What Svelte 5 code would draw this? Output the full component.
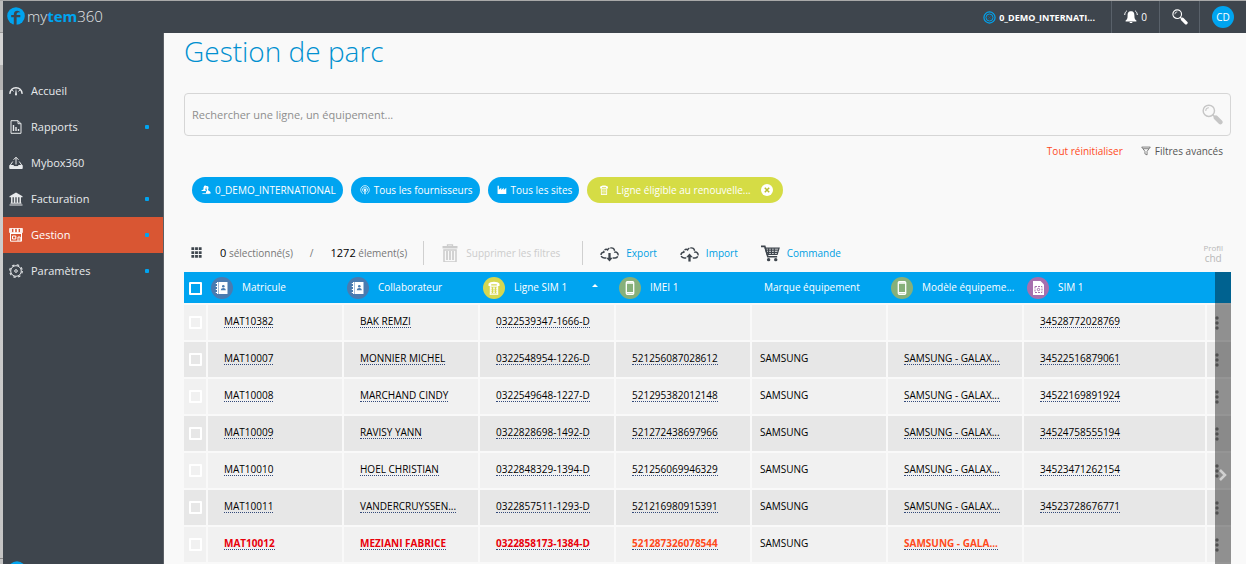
<script>
  const menu = [
    { label: 'Accueil', icon: 'gauge' },
    { label: 'Rapports', icon: 'report', dot: true },
    { label: 'Mybox360', icon: 'inbox' },
    { label: 'Facturation', icon: 'bank', dot: true },
    { label: 'Gestion', icon: 'store', dot: true, active: true },
    { label: 'Paramètres', icon: 'gear', dot: true },
  ];

  const columns = [
    { label: 'Matricule', icon: 'contact', color: 'blue' },
    { label: 'Collaborateur', icon: 'contact', color: 'blue' },
    { label: 'Ligne SIM 1', icon: 'phone', color: 'lime', sorted: true },
    { label: 'IMEI 1', icon: 'mobile', color: 'green' },
    { label: 'Marque équipement' },
    { label: 'Modèle équipeme...', icon: 'mobile', color: 'green' },
    { label: 'SIM 1', icon: 'sim', color: 'purple' },
  ];

  const rows = [
    { cells: ['MAT10382', 'BAK REMZI', '0322539347-1666-D', '', '', '', '34528772028769'] },
    { cells: ['MAT10007', 'MONNIER MICHEL', '0322548954-1226-D', '521256087028612', 'SAMSUNG', 'SAMSUNG - GALAX...', '34522516879061'] },
    { cells: ['MAT10008', 'MARCHAND CINDY', '0322549648-1227-D', '521295382012148', 'SAMSUNG', 'SAMSUNG - GALAX...', '34522169891924'] },
    { cells: ['MAT10009', 'RAVISY YANN', '0322828698-1492-D', '521272438697966', 'SAMSUNG', 'SAMSUNG - GALAX...', '34524758555194'] },
    { cells: ['MAT10010', 'HOEL CHRISTIAN', '0322848329-1394-D', '521256069946329', 'SAMSUNG', 'SAMSUNG - GALAX...', '34523471262154'] },
    { cells: ['MAT10011', 'VANDERCRUYSSEN...', '0322857511-1293-D', '521216980915391', 'SAMSUNG', 'SAMSUNG - GALAX...', '34523728676771'] },
    { cells: ['MAT10012', 'MEZIANI FABRICE', '0322858173-1384-D', '521287326078544', 'SAMSUNG', 'SAMSUNG - GALA...', ''], alert: true },
    { cells: ['', '', '', '', '', '', ''] },
  ];

  const BRAND_COLUMN = 4;

  let search = $state('');
  let selected = $state(rows.map(() => false));

  function toggleAll(event) {
    selected = rows.map(() => event.currentTarget.checked);
  }
</script>

{#snippet logo()}
  <svg class="logo-mark" viewBox="0 0 18 18" aria-hidden="true">
    <circle cx="9" cy="9" r="8.800" fill="#00a4f0" />
    <path fill="#3e454d" d="M6.800 18V10.200H4.200V8h2.600C6.800 5.200 8 3.800 10.300 3.800c1.600 0 2.600.7 3 2-.8-.4-1.500-.5-2.200-.4-1.100.1-1.500 1-1.500 2.600h3.700v2.200H9.600V18z" />
  </svg>
{/snippet}

{#snippet magnifier()}
  <svg viewBox="0 0 20 20" aria-hidden="true">
    <circle cx="6.500" cy="6.500" r="5.400" fill="none" stroke="currentColor" stroke-width="1.400" />
    <path d="M3.600 6.600a3 3 0 0 1 3-3" fill="none" stroke="currentColor" />
    <path d="M10 10l2.200 2.200" stroke="currentColor" stroke-width="1.600" />
    <path d="M13.200 13l4.300 4.300" stroke="currentColor" stroke-width="4.200" stroke-linecap="round" />
  </svg>
{/snippet}

{#snippet icon(name)}
  <svg class="icon" viewBox="0 0 14 14" fill="none" stroke="currentColor" aria-hidden="true">
    {#if name === 'gauge'}
      <path d="M.8 9.800C2 1.800 12 1.800 13.200 9.800" stroke-width="1.400" />
      <path d="M2.800 5.500l1.700 2M11.200 5.500l-1.700 2" />
      <path d="M7 4l1 6.500a1 1 0 0 1-2 0z" fill="currentColor" stroke="none" />
    {:else if name === 'report'}
      <path d="M2 .7h7l3 3v9.600H2zM9 .7v3h3" />
      <path d="M4.500 5v6M7 7v4M9.500 9v2" stroke-width="1.400" />
    {:else if name === 'inbox'}
      <path d="M7 8.500V1.500M4.500 3.800L7 1.200l2.500 2.600M3.800 5.500L1 9.500h3.200l.8 1.300h4l.8-1.300H13l-2.800-4" />
      <path d="M.8 9.500h3.400l.8 1.300h4l.8-1.300h3.400v3H.8z" fill="currentColor" />
    {:else if name === 'bank'}
      <path d="M.5 4.300L7 .5l6.500 3.800v1H.5z" fill="currentColor" stroke="none" />
      <path d="M2.800 5v6M5.600 5v6M8.400 5v6M11.200 5v6" stroke-width="1.500" />
      <path d="M1.500 11.200h11M.5 13h13" />
    {:else if name === 'store'}
      <path d="M.5 .5h13V4.500h-13z" stroke-width=".8" />
      <path d="M2 .5v4M5.300 .5v4M8.700 .5v4M12 .5v4" stroke-width="1.800" />
      <path d="M1.500 5.500v7.700h11V5.500M1 5.500h12M9 13V9h2.200v4M3.500 8h3.300v3H3.500z" />
    {:else if name === 'gear'}
      <circle cx="7" cy="7" r="5.300" />
      <circle cx="7" cy="7" r="6.300" stroke-dasharray="2.500 2.450" stroke-width="1.100" />
      <circle cx="7" cy="7" r="1.300" />
    {:else if name === 'bell'}
      <path d="M7 1.200c-2.800 0-3.400 2-3.400 4.200 0 3-.5 4-2 5.200v.8h10.800v-.8c-1.500-1.200-2-2.200-2-5.200C10.400 3.200 9.800 1.200 7 1.200zM5.700 12h2.600v1H5.700z" fill="currentColor" stroke="none" />
      <path d="M2.800.8C1.500 1.800.8 3.200.7 5M11.200.8c1.300 1 2 2.400 2.100 4.200" />
    {:else if name === 'people'}
      <path d="M4 2.500a2 2 0 0 1 3.500-1c1.800-.6 3.300.5 3 2.300 0 1.500-.5 2.500-.7 3 0 1.400 3.700 1.800 3.700 4.200v1H7v-2C7.200 8.500 8.600 8 8.300 7 7.500 6 7.200 4 7.500 2.600 6.500 3 7 5.500 6 6.200c0 1 1.500 1.400.5 2.300H.5C.5 6.800 3.700 7 3.700 5.600c-.5-.8-.3-2 .3-3.100z" fill="currentColor" stroke="none" />
      <path d="M2 12h10" />
    {:else if name === 'antenna'}
      <path d="M4 12A6 6 0 1 1 10 12M5 9.500a3.500 3.500 0 1 1 4 0" />
      <circle cx="7" cy="6.500" r="1.200" fill="currentColor" />
      <path d="M7 7v6" stroke-width="1.700" />
    {:else if name === 'factory'}
      <path d="M.8 12.500V1h1.800v5.500L6 4v3l3.500-3v3L13 4v8.500z" fill="currentColor" stroke="none" />
    {:else if name === 'phone'}
      <path d="M1.500 5V2.800C2.500 0 11.500 0 12.500 2.800V5H9.800V3.300H4.200V5z" fill="currentColor" stroke="none" />
      <path d="M3.500 5.200h7M3 7.200h2M6 7.200h2M9 7.200h2M3.500 9.200h1.500M6.200 9.200h1.600M9 9.200h1.500M3 11.200h2M6 11.200h2M9 11.200h2M2.800 13.200h8.400" stroke-width="1.300" />
      <path d="M3.300 5v8.500M10.700 5v8.500" />
    {:else if name === 'contact'}
      <path d="M3.500 1h9v12h-9z" fill="currentColor" stroke="none" />
      <path d="M2.500 1v12M.8 2.500h2M.8 5.500h2M.8 8.500h2M.8 11.500h2" />
      <circle cx="8.300" cy="5.300" r="1.300" fill="#4a7bb0" stroke="none" />
      <path d="M5.800 9.300c0-3 5-3 5 0z" fill="#4a7bb0" stroke="none" />
    {:else if name === 'mobile'}
      <rect x="3.300" y=".7" width="7.400" height="12.600" rx="1" stroke-width="1.300" />
      <path d="M3.500 2h7M3.500 11.800h7" stroke-width="1.500" />
    {:else if name === 'sim'}
      <path d="M2 0h7.500L13 3.500V14H2z" fill="currentColor" stroke="none" />
      <rect x="4" y="5.500" width="7" height="6" stroke="#a76fae" stroke-dasharray="2 1" />
      <circle cx="7.500" cy="8.500" r="1.200" stroke="#a76fae" />
    {:else if name === 'grid'}
      <path d="M.5 2.200h3.600M5.200 2.200h3.600M9.900 2.200h3.600M.5 7h3.600M5.200 7h3.600M9.900 7h3.600M.5 11.800h3.600M5.200 11.800h3.600M9.900 11.800h3.600" stroke-width="3.500" />
    {:else if name === 'funnel'}
      <path d="M1 1.500h12L8.500 7.500v5l-3-1.500V7.500zM3 3.800h8" />
    {/if}
  </svg>
{/snippet}

{#snippet cloud(up)}
  <svg class="tool-icon" viewBox="0 0 20 18" fill="none" stroke="#3e454d" stroke-width="1.500" aria-hidden="true">
    <path d="M6.500 14.200H4.500C0 14 0 8.500 4 8.200 3.800 5.500 6.500 4.500 8 5.700 10 2 16 3.500 15.500 8c4.500-.5 4.800 6 .5 6.200h-2.500" stroke-dasharray="6 1" />
    {#if up}
      <path d="M10 18v-6" stroke-width="2.400" />
      <path d="M6.500 13.500L10 9.500l3.500 4z" fill="#3e454d" stroke="none" />
    {:else}
      <path d="M10 9v6" stroke-width="2.400" />
      <path d="M6.500 14L10 18l3.500-4z" fill="#3e454d" stroke="none" />
    {/if}
  </svg>
{/snippet}

<div class="window">
  <div class="edge"></div>
  <div class="app">
    <header class="topbar">
      <a class="brand" href="#accueil">
        {@render logo()}
        <span>my<b>tem</b>360</span>
      </a>
      <button class="account">
        <svg viewBox="0 0 14 14" fill="none" stroke="#00a4f0" aria-hidden="true">
          <circle cx="7" cy="7" r="6" stroke-width="1.300" />
          <circle cx="7" cy="7" r="3.800" />
          <path d="M4.500 4.500l5 5M9.500 4.500l-5 5" stroke="#0077b3" stroke-width=".5" />
        </svg>
        0_DEMO_INTERNATI...
      </button>
      <button class="alerts" aria-label="Notifications">{@render icon('bell')}0</button>
      <button class="find" aria-label="Rechercher">{@render magnifier()}</button>
      <button class="user"><span>CD</span></button>
    </header>

    <div class="body">
      <aside>
        <nav>
          {#each menu as item}
            <a href="#{item.icon}" class:active={item.active}>
              {@render icon(item.icon)}
              <span>{item.label}</span>
              {#if item.dot}<i class="dot"></i>{/if}
            </a>
          {/each}
        </nav>
        <div class="foot">{@render logo()}</div>
      </aside>

      <main>
        <h1>Gestion de parc</h1>

        <label class="search">
          <input type="text" bind:value={search} placeholder="Rechercher une ligne, un équipement..." aria-label="Rechercher" />
          {@render magnifier()}
        </label>

        <div class="filters">
          <button class="reset">Tout réinitialiser</button>
          <button class="advanced">{@render icon('funnel')}Filtres avancés</button>
        </div>

        <div class="pills">
          <button class="pill">{@render icon('people')}0_DEMO_INTERNATIONAL</button>
          <button class="pill">{@render icon('antenna')}Tous les fournisseurs</button>
          <button class="pill">{@render icon('factory')}Tous les sites</button>
          <button class="pill lime">
            {@render icon('phone')}Ligne éligible au renouvelle...
            <svg class="close" viewBox="0 0 12 12" aria-hidden="true">
              <circle cx="6" cy="6" r="6" fill="#fff" />
              <path d="M3.800 3.800l4.400 4.400M8.200 3.800L3.800 8.200" stroke="#b9bd2e" stroke-width="1.500" />
            </svg>
          </button>
        </div>

        <div class="toolbar">
          <button class="grid-toggle" aria-label="Colonnes">{@render icon('grid')}</button>
          <span class="count"><b>0</b> sélectionné(s)</span>
          <span class="slash">/</span>
          <span class="count"><b>1272</b> élement(s)</span>
          <button class="clear" disabled>
            <svg class="tool-icon trash" viewBox="0 0 16 18" fill="none" stroke="#ccc" aria-hidden="true">
              <path d="M5.500 2V.8h5V2" stroke-width="1.300" />
              <path d="M.5 3.200h15" stroke-width="2.400" />
              <path d="M2 6h12v12H2z" stroke-width="1.500" />
              <path d="M5 7v9M8 7v9M11 7v9" stroke-width="1.700" />
            </svg>
            Supprimer les filtres
          </button>
          <button class="tool">{@render cloud(false)}Export</button>
          <button class="tool">{@render cloud(true)}Import</button>
          <button class="tool">
            <svg class="tool-icon" viewBox="0 0 20 18" fill="none" stroke="#3e454d" aria-hidden="true">
              <path d="M0 2h4l3.200 11H17" stroke-width="1.700" />
              <path d="M4.500 3.800h14.500L17 10.500H6.500z" stroke-width="1.300" />
              <path d="M5 6h13M6 8.300h11.500M8 4v6.500M11 4v6.500M14 4v6.500" stroke-width="1.200" />
              <circle cx="8" cy="16" r="1.800" fill="#3e454d" stroke="none" />
              <circle cx="15.500" cy="16" r="1.800" fill="#3e454d" stroke="none" />
            </svg>
            Commande
          </button>
          <div class="profile"><small>Profil</small><span>chd</span></div>
        </div>

        <div class="list">
          <table>
            <colgroup>
              <col class="col-check" />
              {#each columns.slice(0, -1) as column}<col class="col-data" />{/each}
              <col />
              <col class="col-more" />
            </colgroup>
            <thead>
              <tr>
                <th class="check"><input type="checkbox" aria-label="Tout sélectionner" onchange={toggleAll} /></th>
                {#each columns as column}
                  <th>
                    <div class="head" class:plain={!column.icon}>
                      {#if column.icon}<span class="badge {column.color}">{@render icon(column.icon)}</span>{/if}
                      <span class="label">{column.label}</span>
                      {#if column.sorted}<i class="sort"></i>{/if}
                    </div>
                  </th>
                {/each}
                <th></th>
              </tr>
            </thead>
            <tbody>
              {#each rows as row, i}
                <tr class:alert={row.alert}>
                  <td class="check"><input type="checkbox" bind:checked={selected[i]} aria-label="Sélectionner la ligne" /></td>
                  {#each row.cells as cell, c}
                    {#if c === BRAND_COLUMN}
                      <td class="brand-name">{cell}</td>
                    {:else}
                      <td class:orange={row.alert && c > 2}>{#if cell}<a href="#{row.cells[0]}">{cell}</a>{/if}</td>
                    {/if}
                  {/each}
                  <td class="more">
                    <svg viewBox="0 0 4 14" fill="#888" aria-hidden="true">
                      <circle cx="2" cy="2" r="1.700" /><circle cx="2" cy="7" r="1.700" /><circle cx="2" cy="12" r="1.700" />
                    </svg>
                  </td>
                </tr>
              {/each}
            </tbody>
          </table>
          <button class="scroller" aria-label="Colonnes suivantes">
            <svg viewBox="0 0 8 12" fill="none" stroke="#d0d0d0" stroke-width="2.500" aria-hidden="true"><path d="M1 1l5 5-5 5" /></svg>
          </button>
        </div>
      </main>
    </div>
  </div>
</div>

<style>
  :global(body) {
    background: #f9f9f9;
    overflow: hidden;
  }

  .window {
    box-sizing: border-box;
    display: flex;
    height: 100vh;
    border-top: 1px solid #a9a9a9;
    font-family: "Open Sans", "Noto Sans", sans-serif;
    font-size: 10px;
    color: #000;
    overflow: hidden;
  }

  .edge {
    width: 3px;
    background: linear-gradient(#bcbcbc 31px, #999 31px, #999 32px, #d4d4d4 32px, #d4d4d4 64px, #b4b4b4 64px, #b4b4b4 89px, #d0d0d0 89px, #c4c4c4 557px, #888 557px, #888 558px, #c4c4c4 558px);
  }

  .app {
    flex: 1;
    min-width: 0;
    display: flex;
    flex-direction: column;
  }

  button {
    display: flex;
    align-items: center;
    padding: 0;
    border: 0;
    background: none;
    font: inherit;
    color: inherit;
    white-space: nowrap;
    cursor: pointer;
  }

  a {
    color: inherit;
  }

  svg {
    display: block;
    flex: none;
  }

  .icon {
    width: 14px;
    height: 14px;
  }

  .topbar {
    flex: none;
    display: flex;
    height: 32px;
    background: #3e454d;
    color: #fff;
  }

  .brand {
    display: flex;
    align-items: center;
    gap: 2px;
    margin-right: auto;
    padding: 0 0 2px 4px;
    font-size: 15px;
    line-height: 28px;
    font-weight: 300;
    text-decoration: none;
    color: #e4e6e8;
  }

  .brand b {
    font-weight: 700;
    color: #00a4f0;
  }

  .logo-mark {
    width: 18px;
    height: 18px;
  }

  .account {
    gap: 3px;
    padding-right: 16px;
    font-size: 9px;
    font-weight: 700;
  }

  .account svg {
    width: 13px;
    height: 13px;
  }

  .topbar button + button {
    box-sizing: border-box;
    justify-content: center;
    border-left: 1px solid #59616a;
  }

  .topbar .alerts {
    width: 48px;
    gap: 3px;
  }

  .topbar .find {
    width: 40px;
  }

  .find svg {
    width: 16px;
    height: 16px;
  }

  .topbar .user {
    width: 47px;
  }

  .user span {
    width: 22px;
    border-radius: 50%;
    background: #00a4f0;
    line-height: 22px;
    text-align: center;
  }

  .body {
    flex: 1;
    min-height: 0;
    display: flex;
  }

  aside {
    flex: none;
    display: flex;
    flex-direction: column;
    justify-content: space-between;
    box-sizing: border-box;
    width: 161px;
    padding-top: 40px;
    border-right: 1px solid #5b6066;
    background: #3e454d;
    overflow: hidden;
  }

  nav a {
    display: flex;
    align-items: center;
    gap: 8px;
    height: 36px;
    padding: 0 14px 0 6px;
    font-size: 11px;
    font-weight: 500;
    color: #e8eaec;
    text-decoration: none;
  }

  nav span {
    padding-bottom: 1px;
  }

  nav a.active {
    background: #d95633;
    color: #fff;
  }

  .dot {
    width: 4px;
    height: 4px;
    margin-left: auto;
    border-radius: 1px;
    background: #00a4f0;
  }

  .foot {
    height: 3px;
    padding-left: 5px;
  }

  main {
    flex: 1;
    min-width: 0;
    padding: 0 15px 0 20px;
    background: #f9f9f9;
    overflow: hidden;
  }

  h1 {
    margin: 0;
    font-size: 28px;
    line-height: 36px;
    font-weight: 300;
    color: #0090d0;
  }

  .search {
    display: flex;
    align-items: center;
    box-sizing: border-box;
    height: 43px;
    margin-top: 24px;
    padding: 0 7px;
    border: 1px solid #d6d6d6;
    border-radius: 4px;
    color: #c6c6c6;
  }

  .search input {
    flex: 1;
    padding: 0;
    border: 0;
    outline: 0;
    background: none;
    font: inherit;
    font-size: 11px;
    color: #333;
  }

  .search input::placeholder {
    color: #8e8e8e;
  }

  .search svg {
    width: 21px;
    height: 21px;
  }

  .filters {
    display: flex;
    justify-content: flex-end;
    gap: 18px;
    height: 30px;
    padding-right: 8px;
  }

  .reset {
    color: #ff4a1c;
  }

  .advanced {
    gap: 4px;
    color: #555;
  }

  .advanced .icon {
    width: 10px;
    height: 10px;
  }

  .pills {
    display: flex;
    gap: 8px;
    padding: 11px 8px 0;
  }

  .pill {
    gap: 4px;
    height: 26px;
    padding: 0 7px 0 9px;
    border-radius: 13px;
    background: #00a4f0;
    color: #fff;
  }

  .pill .icon {
    width: 10px;
    height: 10px;
  }

  .pill.lime {
    gap: 7px;
    padding: 0 10px 0 12px;
    background: #d5dc45;
  }

  .pill .close {
    width: 12px;
    height: 12px;
    margin-left: 3px;
  }

  .toolbar {
    display: flex;
    align-items: center;
    height: 31px;
    margin-top: 34px;
    padding: 0 8px 4px 7px;
    color: #777;
  }

  .grid-toggle {
    margin-right: 18px;
    color: #3e454d;
  }

  .grid-toggle .icon {
    width: 11px;
    height: 11px;
  }

  .count b {
    font-size: 11px;
    font-weight: 400;
    color: #000;
  }

  .slash {
    margin: 0 17px;
  }

  .clear {
    gap: 8px;
    height: 24px;
    margin: 0 17px 0 16px;
    padding: 0 22px 0 18px;
    border-left: 1px solid #d0d0d0;
    border-right: 1px solid #d0d0d0;
    color: #ccc;
  }

  .tool {
    gap: 7px;
    margin-right: 23px;
    color: #009fe3;
  }

  .tool-icon {
    width: 19px;
    height: 18px;
  }

  .trash {
    width: 16px;
  }

  .profile {
    display: flex;
    flex-direction: column;
    align-items: center;
    margin-left: auto;
    line-height: 11px;
    color: #b8b8b8;
  }

  .profile small {
    font-size: 8px;
  }

  .list {
    position: relative;
  }

  table {
    width: 100%;
    table-layout: fixed;
    border-spacing: 0;
  }

  .col-check,
  .col-more {
    width: 24px;
  }

  .col-data {
    width: 136px;
  }

  th {
    box-sizing: border-box;
    height: 31px;
    padding: 0;
    background: #00a4f0;
    font-weight: 400;
    text-align: left;
    color: #fff;
  }

  .head {
    display: flex;
    align-items: center;
    gap: 9px;
    padding-left: 3px;
    white-space: nowrap;
  }

  .head.plain {
    padding-left: 12px;
  }

  .head .label {
    padding-bottom: 2px;
  }

  .badge {
    display: flex;
    align-items: center;
    justify-content: center;
    width: 22px;
    height: 22px;
    border-radius: 50%;
  }

  .badge.blue { background: #4a7bb0; }
  .badge.lime { background: #d5d750; }
  .badge.green { background: #86b07a; }
  .badge.purple { background: #a76fae; }

  .sort {
    margin: 0 18px 4px auto;
    border: 3px solid transparent;
    border-top: 0;
    border-bottom: 3px solid #fff;
  }

  td {
    box-sizing: border-box;
    height: 37px;
    padding: 0 0 3px 16px;
    border-top: 2px solid #f9f9f9;
    border-right: 2px solid #f9f9f9;
    background: #f1f1f1;
    white-space: nowrap;
  }

  tr:nth-child(even) td {
    background: #e7e7e7;
  }

  td a {
    display: inline-block;
    border-bottom: 1px dotted #334a7a;
    line-height: 11px;
    text-decoration: none;
  }

  td.brand-name {
    padding-left: 8px;
  }

  .alert a {
    font-weight: 700;
    color: #e8000b;
  }

  .alert .orange a {
    color: #ff4a1c;
  }

  th.check {
    padding: 2px 0 0 5px;
  }

  td.check {
    padding: 0 0 0 5px;
  }

  .check input {
    display: block;
    appearance: none;
    box-sizing: border-box;
    width: 13px;
    height: 13px;
    margin: 0;
    border: 2px solid #fff;
    border-radius: 1px;
  }

  .check input:checked {
    background: #00a4f0;
  }

  td.more {
    padding: 0 0 0 8px;
    border-right: 0;
  }

  .more svg {
    width: 4px;
    height: 14px;
  }

  .scroller {
    position: absolute;
    top: 0;
    right: 0;
    bottom: 0;
    align-items: flex-start;
    justify-content: center;
    width: 16px;
    padding-top: 197px;
    background: rgba(0, 0, 0, 0.4);
  }

  .scroller svg {
    width: 8px;
    height: 12px;
  }
</style>
